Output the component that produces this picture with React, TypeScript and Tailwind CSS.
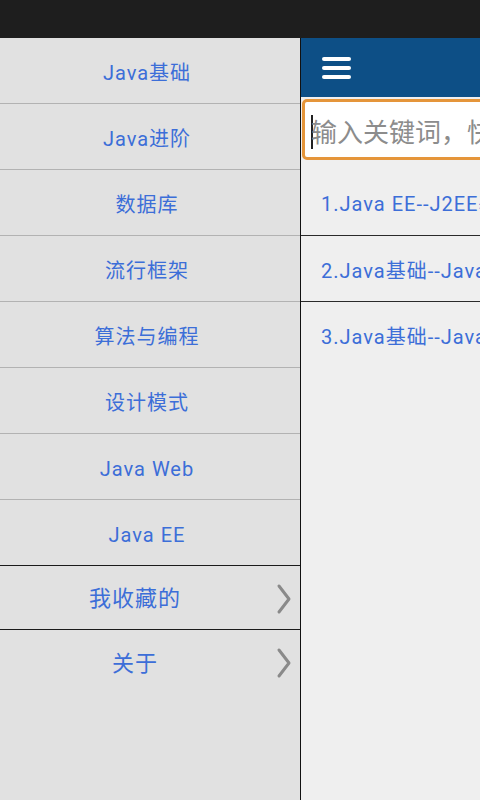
const MENU = ["Java基础", "Java进阶", "数据库", "流行框架", "算法与编程", "设计模式", "Java Web", "Java EE"];
const EXTRA = ["我收藏的", "关于"];
const ARTICLES = ["1.Java EE--J2EE基础知识", "2.Java基础--Java面试题", "3.Java基础--Java常见问题"];

function Chevron() {
  return (
    <svg width="16" height="32" viewBox="0 0 16 32" className="absolute right-[8px]">
      <path d="M3 3 L13 16 L3 29" fill="none" stroke="#8a8a8a" strokeWidth="3" strokeLinecap="round" strokeLinejoin="round" />
    </svg>
  );
}

export default function App() {
  return (
    <div
      className="w-[480px] h-[800px] overflow-hidden flex flex-col bg-[#1e1e1e]"
      style={{ fontFamily: 'Roboto, "Noto Sans CJK SC", sans-serif' }}
    >
      {/* status bar */}
      <div className="h-[38px] shrink-0 bg-[#1e1e1e]" />

      <div className="flex flex-1 min-h-0">
        {/* drawer */}
        <div className="w-[300px] shrink-0 bg-[#e1e1e1] flex flex-col">
          {MENU.map((m, i) => (
            <div
              key={m}
              className={`h-[66px] shrink-0 flex items-center justify-center pr-[6px] pt-[5px] text-[20px] text-[#3c6ed8] tracking-[1px] ${
                i === MENU.length - 1 ? "border-b border-[#1a1a1a]" : "border-b border-[#b2b2b2]"
              }`}
            >
              {m}
            </div>
          ))}
          {EXTRA.map((m, i) => (
            <div
              key={m}
              className={`relative h-[64px] shrink-0 flex items-center pr-[30px] pt-[2px] ${i === 0 ? "border-b border-[#1a1a1a]" : ""}`}
            >
              <span className="flex-1 text-center text-[22px] text-[#3c6ed8] tracking-[1px]">{m}</span>
              <Chevron />
            </div>
          ))}
        </div>

        <div className="w-[1px] shrink-0 bg-[#111]" />

        {/* content */}
        <div className="flex-1 min-w-0 bg-[#efefef] flex flex-col overflow-hidden">
          <div className="h-[59px] shrink-0 bg-[#0d4f86] flex items-center pl-[21px]">
            <div className="flex flex-col gap-[5px]">
              <div className="w-[29px] h-[4px] rounded-full bg-white" />
              <div className="w-[29px] h-[4px] rounded-full bg-white" />
              <div className="w-[29px] h-[4px] rounded-full bg-white" />
            </div>
          </div>

          <div className="pl-[1px] pt-[2px] pb-[1px] bg-[#efefef]">
            <div className="h-[61px] w-[230px] rounded-[5px] border-[3px] border-[#e5953a] bg-white flex items-center pl-[6px] pt-[7px] overflow-hidden">
              <div className="w-[2px] h-[34px] bg-[#222] shrink-0 -mt-[3px]" />
              <span className="text-[26px] text-[#8c8c8c] whitespace-nowrap -ml-[2px]">输入关键词，快速搜索</span>
            </div>
          </div>

          {ARTICLES.map((a, i) => (
            <div
              key={a}
              className={`${i === 0 ? "h-[75px] pt-[12px]" : "h-[66px] pt-[4px]"} shrink-0 flex items-center pl-[20px] text-[20px] text-[#3c6ed8] whitespace-nowrap tracking-[1px] ${
                i < 2 ? "border-b border-[#2a2a2a]" : ""
              }`}
            >
              {a}
            </div>
          ))}
          <div className="flex-1" />
        </div>
      </div>
    </div>
  );
}
